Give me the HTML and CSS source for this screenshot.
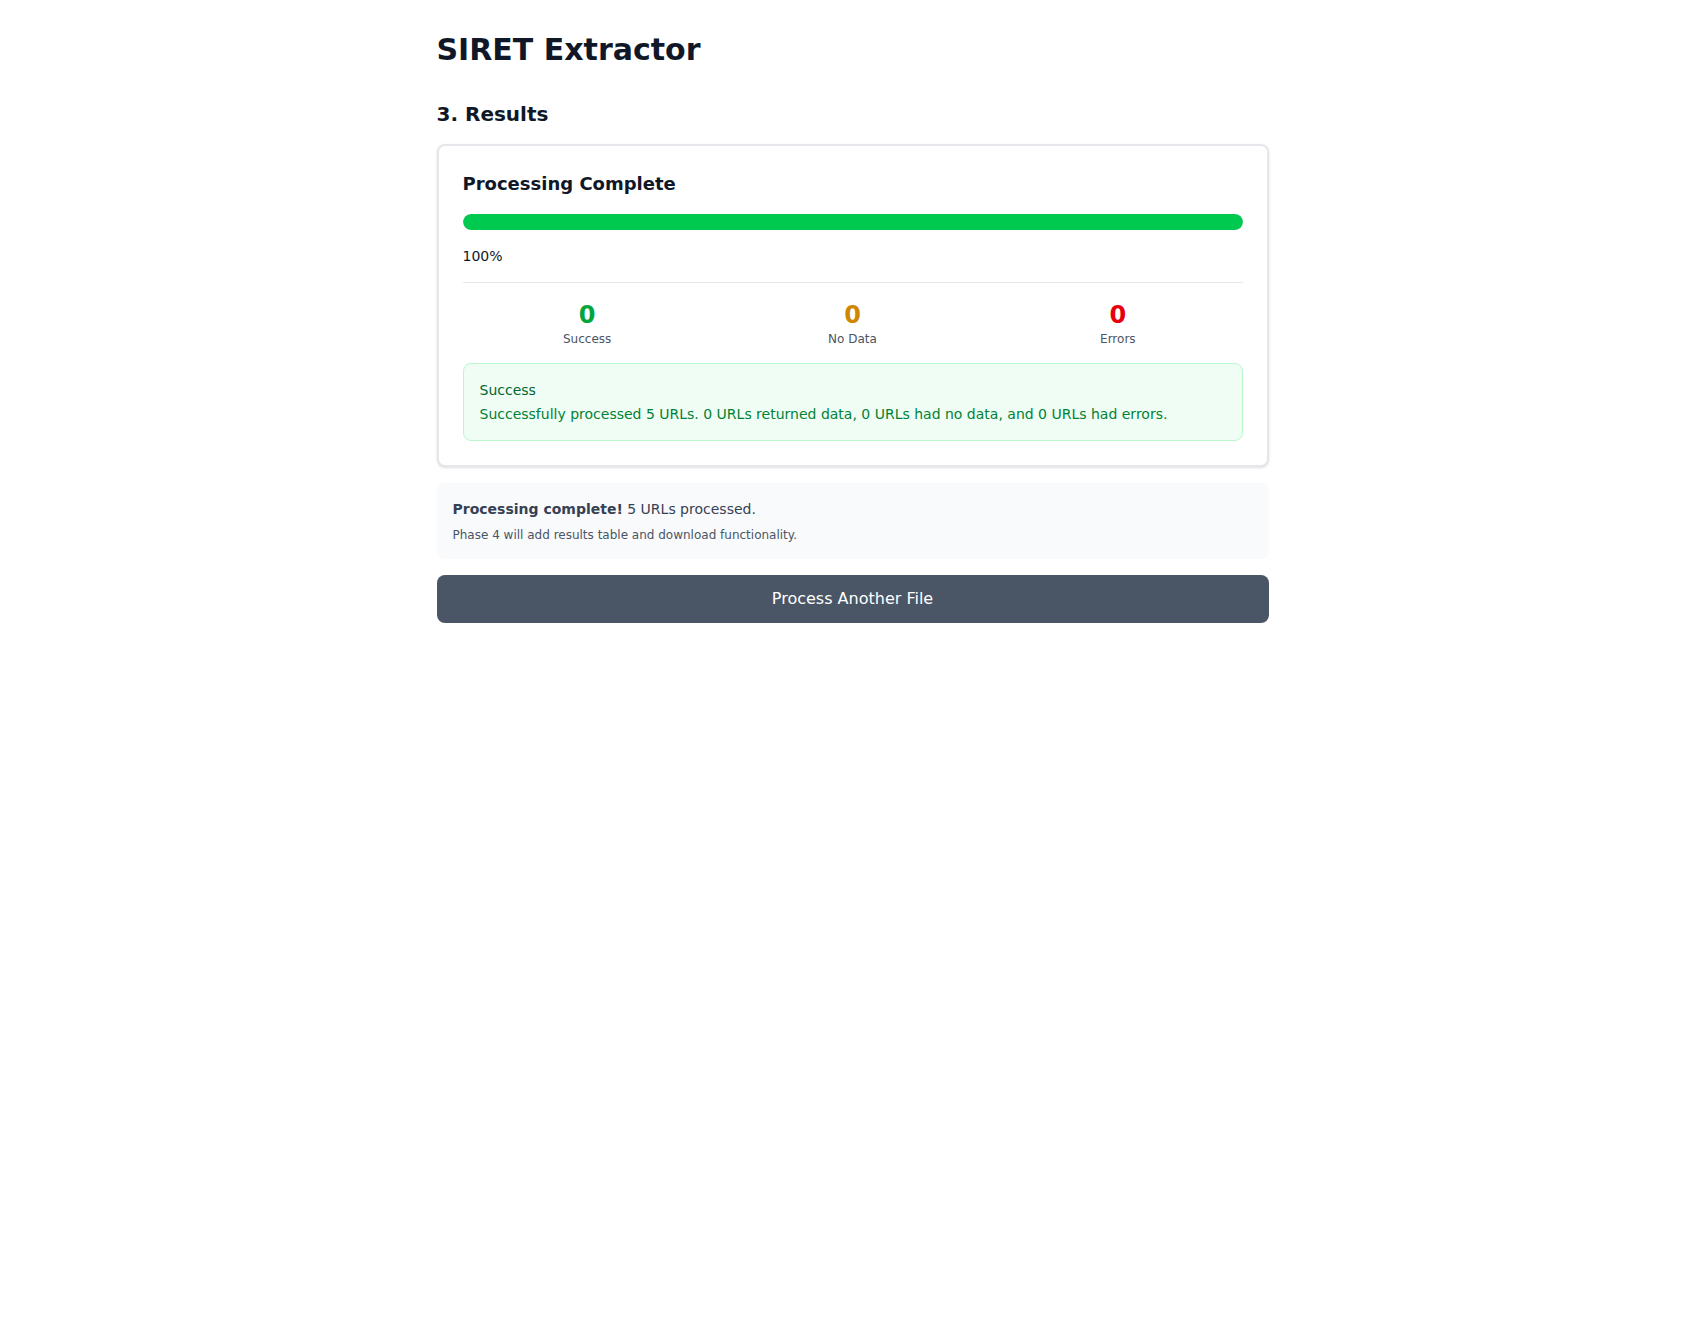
FILE: index.html
```html
<!DOCTYPE html>
<html lang="en">
<head>
<meta charset="utf-8">
<title>SIRET Extractor</title>
<link rel="stylesheet" href="styles.css">
</head>
<body>
<main class="page">
  <h1 class="title">SIRET Extractor</h1>
  <section class="results">
    <h2 class="section-title">3. Results</h2>
    <div class="card">
      <h3 class="card-title">Processing Complete</h3>
      <div class="progress"><div class="progress-fill" style="width:100%"></div></div>
      <p class="percent">100%</p>
      <div class="stats">
        <div class="stat">
          <div class="stat-value green">0</div>
          <div class="stat-label">Success</div>
        </div>
        <div class="stat">
          <div class="stat-value amber">0</div>
          <div class="stat-label">No Data</div>
        </div>
        <div class="stat">
          <div class="stat-value red">0</div>
          <div class="stat-label">Errors</div>
        </div>
      </div>
      <div class="alert">
        <div class="alert-title">Success</div>
        <div class="alert-text">Successfully processed 5 URLs. 0 URLs returned data, 0 URLs had no data, and 0 URLs had errors.</div>
      </div>
    </div>
    <div class="info">
      <p class="info-main"><strong>Processing complete!</strong> 5 URLs processed.</p>
      <p class="info-sub">Phase 4 will add results table and download functionality.</p>
    </div>
    <button class="btn" type="button">Process Another File</button>
  </section>
</main>
</body>
</html>
```

FILE: styles.css
```css
* { box-sizing: border-box; }
html, body { margin: 0; padding: 0; background: #ffffff; }
body {
  font-family: "DejaVu Sans", "Noto Sans", sans-serif;
  color: #101828;
}
.page {
  max-width: 896px;
  margin: 0 auto;
  padding: 32px 32px;
}
.title {
  margin: 0;
  font-size: 30px;
  line-height: 36px;
  font-weight: 700;
  color: #101828;
}
.results {
  margin-top: 32px;
  display: flex;
  flex-direction: column;
  gap: 16px;
}
.section-title {
  margin: 0;
  font-size: 20px;
  line-height: 28px;
  font-weight: 700;
  color: #101828;
}
.card {
  border: 2px solid #e5e7eb;
  border-radius: 8px;
  padding: 24px;
  background: #fff;
  box-shadow: 0 1px 3px rgba(0,0,0,0.1), 0 1px 2px -1px rgba(0,0,0,0.1);
}
.card-title {
  margin: 0 0 16px;
  font-size: 18px;
  line-height: 28px;
  font-weight: 700;
  color: #101828;
}
.progress {
  height: 16px;
  background: #e5e7eb;
  border-radius: 9999px;
  overflow: hidden;
}
.progress-fill {
  height: 100%;
  background: #00c950;
  border-radius: 9999px;
}
.percent {
  margin: 16px 0 0;
  font-size: 14px;
  line-height: 20px;
  color: #101828;
}
.stats {
  margin-top: 16px;
  padding-top: 16px;
  border-top: 1px solid #e5e7eb;
  display: grid;
  grid-template-columns: repeat(3, 1fr);
  gap: 16px;
  text-align: center;
}
.stat-value {
  font-size: 24px;
  line-height: 32px;
  font-weight: 700;
}
.green { color: #00a63e; }
.amber { color: #d08700; }
.red { color: #e7000b; }
.stat-label {
  font-size: 12px;
  line-height: 16px;
  color: #4a5565;
}
.alert {
  margin-top: 16px;
  border: 1px solid #b9f8cf;
  background: #f0fdf4;
  border-radius: 8px;
  padding: 16px;
  font-size: 14px;
  line-height: 20px;
}
.alert-title {
  color: #016630;
  font-weight: 500;
}
.alert-text {
  margin-top: 4px;
  color: #008236;
}
.info {
  background: #f9fafb;
  border-radius: 8px;
  padding: 16px;
}
.info-main {
  margin: 0;
  font-size: 14px;
  line-height: 20px;
  color: #364153;
}
.info-sub {
  margin: 8px 0 0;
  font-size: 12px;
  line-height: 16px;
  color: #4a5565;
}
.btn {
  display: block;
  width: 100%;
  height: 48px;
  border: 0;
  border-radius: 8px;
  background: #4a5565;
  color: #ffffff;
  font-family: inherit;
  font-size: 16px;
  line-height: 24px;
  cursor: pointer;
}
```
